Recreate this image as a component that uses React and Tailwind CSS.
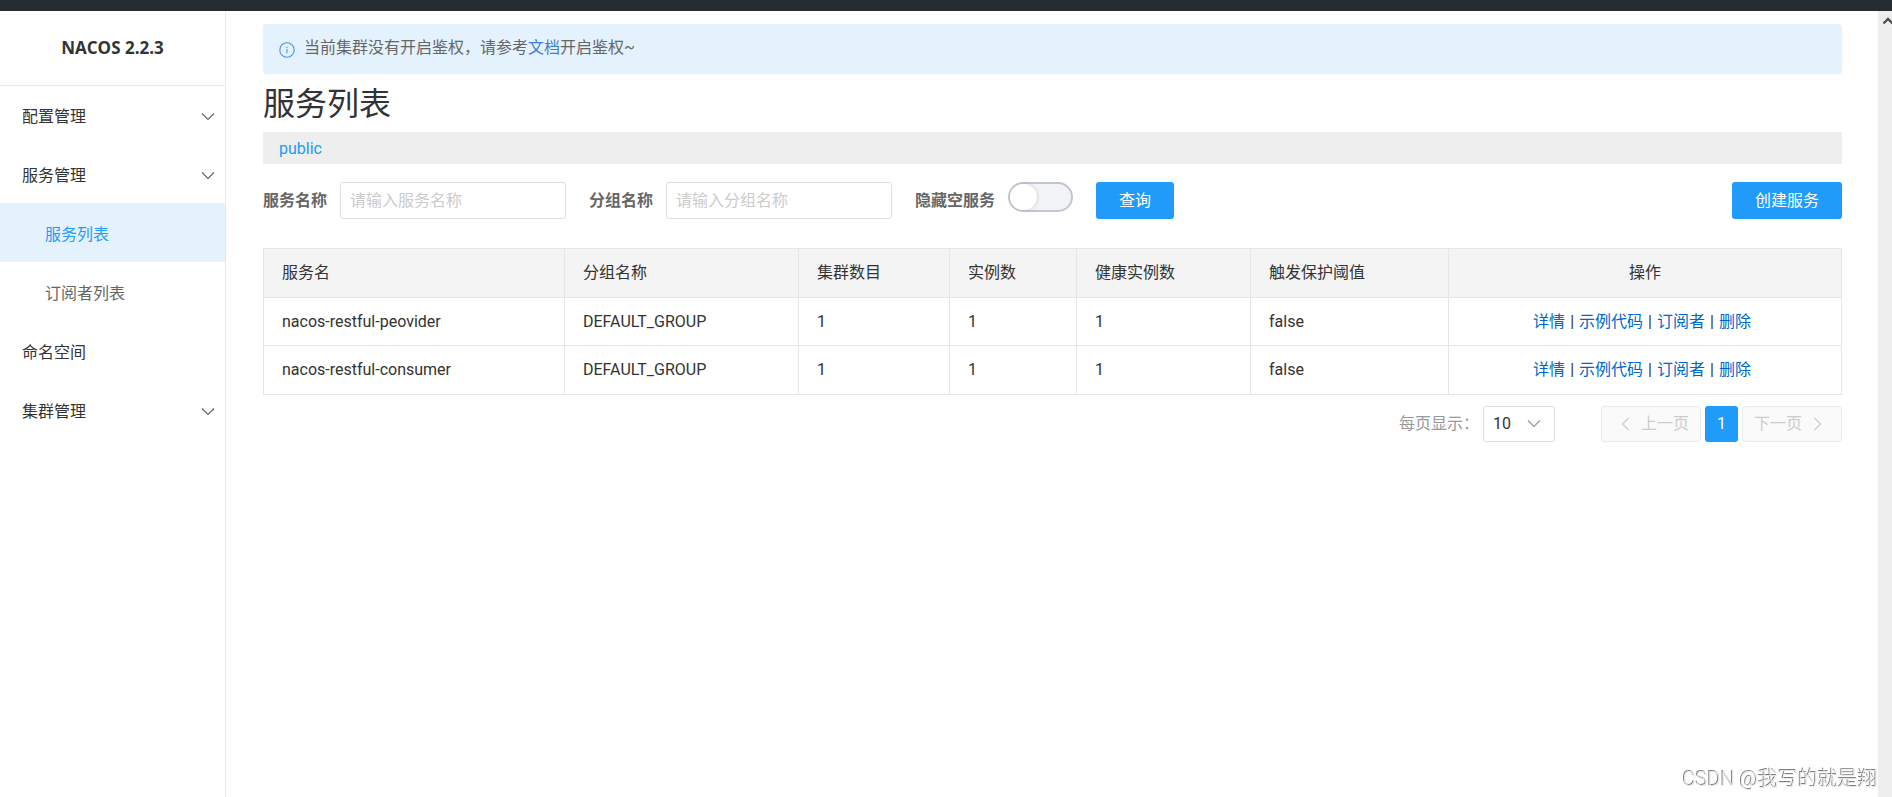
import { clsx } from 'clsx'

const menu = [
  { label: '配置管理', expandable: true },
  { label: '服务管理', expandable: true },
  { label: '服务列表', child: true, active: true },
  { label: '订阅者列表', child: true },
  { label: '命名空间' },
  { label: '集群管理', expandable: true },
]

const columns = [
  { title: '服务名', width: 'w-[301px]' },
  { title: '分组名称', width: 'w-[234px]' },
  { title: '集群数目', width: 'w-[151px]' },
  { title: '实例数', width: 'w-[127px]' },
  { title: '健康实例数', width: 'w-[174px]' },
  { title: '触发保护阈值', width: 'w-[198px]' },
]

const services = [
  { name: 'nacos-restful-peovider', group: 'DEFAULT_GROUP', clusters: 1, instances: 1, healthy: 1, threshold: 'false' },
  { name: 'nacos-restful-consumer', group: 'DEFAULT_GROUP', clusters: 1, instances: 1, healthy: 1, threshold: 'false' },
]

const actions = ['详情', '示例代码', '订阅者', '删除']

function Chevron({ className, d = 'M1 3.5 L7 9.5 L13 3.5' }) {
  return (
    <svg
      viewBox="0 0 14 14"
      className={clsx('h-3.5 w-3.5 shrink-0', className)}
      fill="none"
      stroke="currentColor"
      strokeWidth="1.2"
      aria-hidden="true"
    >
      <path d={d} />
    </svg>
  )
}

function Sidebar() {
  return (
    <aside className="w-[226px] shrink-0 border-r border-[#ebebeb]">
      <div className="flex h-[75px] items-center justify-center border-b border-[#ebebeb] font-['Open_Sans'] text-[17px] font-bold text-[#333]">
        NACOS 2.2.3
      </div>
      <nav className="-mt-px">
        {menu.map((item) => (
          <a
            key={item.label}
            href="#"
            className={clsx(
              'flex h-[59px] items-center justify-between pt-1 pr-2.5',
              item.child ? 'pl-[45px]' : 'pl-[22px]',
              item.active ? 'bg-[#e4f2fe] text-[#209bfa]' : item.child ? 'text-[#666]' : 'text-[#333]',
            )}
          >
            {item.label}
            {item.expandable && <Chevron className="text-[#666]" />}
          </a>
        ))}
      </nav>
    </aside>
  )
}

function AuthNotice() {
  return (
    <div className="flex h-[50px] items-center rounded-[3px] bg-[#e4f2fe] px-4 text-[#666]">
      <svg
        viewBox="0 0 16 16"
        className="mt-0.5 mr-[9px] h-4 w-4"
        fill="none"
        stroke="#4494f9"
        aria-hidden="true"
      >
        <circle cx="8" cy="8" r="7.2" strokeWidth="1.1" />
        <path d="M8 7 V11.2 M8 4.8 V6" strokeWidth="1.1" />
      </svg>
      <p className="pb-0.5">
        当前集群没有开启鉴权，请参考
        <a href="#" className="text-[#3f7fd6]">文档</a>
        开启鉴权~
      </p>
    </div>
  )
}

function SearchField({ id, label, placeholder }) {
  return (
    <div className="mr-[23px] flex items-center">
      <label htmlFor={id} className="mr-[13px] font-bold">{label}</label>
      <input
        id={id}
        type="text"
        placeholder={placeholder}
        className="h-[37px] w-[226px] rounded-[3px] border border-[#dcdee3] bg-white px-[9px] placeholder:text-[#ccc]"
      />
    </div>
  )
}

function SearchBar() {
  return (
    <form className="mt-[18px] flex items-start justify-between">
      <div className="flex items-start text-[#666]">
        <SearchField id="service-name" label="服务名称" placeholder="请输入服务名称" />
        <SearchField id="group-name" label="分组名称" placeholder="请输入分组名称" />
        <label htmlFor="hide-empty" className="mr-[13px] leading-[37px] font-bold">隐藏空服务</label>
        <input
          id="hide-empty"
          type="checkbox"
          role="switch"
          className="mr-[23px] flex h-[30px] w-[65px] appearance-none rounded-full border-2 border-[#c4c6cf] bg-[#f2f3f7] before:h-[26px] before:w-[27px] before:rounded-full before:bg-white before:shadow-[1px_0_3px_rgba(0,0,0,0.12)]"
        />
        <button type="button" className="h-[37px] rounded-[3px] bg-[#209bfa] px-[23px] text-white">
          查询
        </button>
      </div>
      <button type="button" className="h-[37px] rounded-[3px] bg-[#209bfa] px-[23px] text-white">
        创建服务
      </button>
    </form>
  )
}

function ServiceTable() {
  return (
    <table className="mt-[29px] w-full table-fixed border-collapse text-left text-[#333] [&_td]:border [&_td]:border-[#e6e6e6] [&_td]:px-[18px] [&_th]:border [&_th]:border-[#e6e6e6] [&_th]:px-[18px]">
      <thead className="bg-[#f4f4f4]">
        <tr className="h-[49px]">
          {columns.map((col) => (
            <th key={col.title} className={clsx('font-normal', col.width)}>{col.title}</th>
          ))}
          <th className="text-center font-normal">操作</th>
        </tr>
      </thead>
      <tbody>
        {services.map((s) => (
          <tr key={s.name} className="h-12 last:h-[49px]">
            <td>{s.name}</td>
            <td>{s.group}</td>
            <td>{s.clusters}</td>
            <td>{s.instances}</td>
            <td>{s.healthy}</td>
            <td>{s.threshold}</td>
            <td>
              <div className="flex justify-center gap-[5px] pr-1.5">
                {actions.map((action, i) => (
                  <span key={action} className="flex gap-[5px]">
                    {i > 0 && <span>|</span>}
                    <a href="#" className="text-[#06c]">{action}</a>
                  </span>
                ))}
              </div>
            </td>
          </tr>
        ))}
      </tbody>
    </table>
  )
}

function Pagination() {
  return (
    <div className="mt-[11px] flex items-center justify-end">
      <label htmlFor="page-size" className="mr-1 text-[#999]">每页显示：</label>
      <div className="relative mr-[46px]">
        <select
          id="page-size"
          defaultValue="10"
          className="h-9 w-[72px] appearance-none rounded-[3px] border border-[#dcdee3] bg-white pl-[9px] text-[#333]"
        >
          <option>10</option>
          <option>20</option>
          <option>50</option>
        </select>
        <Chevron className="pointer-events-none absolute top-[11px] right-3.5 text-[#999]" />
      </div>
      <button
        type="button"
        disabled
        className="flex h-9 items-center gap-2 rounded-[3px] border border-[#ebebeb] bg-[#fafafa] pr-[11px] pl-[17px] text-[#ccc]"
      >
        <Chevron d="M9.5 1 L3.5 7 L9.5 13" />
        上一页
      </button>
      <button type="button" className="mx-1 h-9 w-[33px] rounded-[3px] bg-[#209bfa] text-white">1</button>
      <button
        type="button"
        disabled
        className="flex h-9 items-center gap-2 rounded-[3px] border border-[#ebebeb] bg-[#fafafa] pr-[17px] pl-[11px] text-[#ccc]"
      >
        下一页
        <Chevron d="M4.5 1 L10.5 7 L4.5 13" />
      </button>
    </div>
  )
}

export default function App() {
  return (
    <div className="flex min-h-screen flex-col bg-white font-[Roboto,'Noto_Sans_CJK_SC',sans-serif] text-base">
      <header className="h-[11px] bg-[#252b2f]" />
      <div className="flex flex-1">
        <Sidebar />
        <main className="min-w-0 flex-1 pt-[13px] pr-9 pl-[37px]">
          <AuthNotice />
          <h1 className="mt-[5px] text-[32px] leading-[50px] text-[#333]">服务列表</h1>
          <div className="mt-[3px] bg-[#eee] px-4 pt-0.5 leading-[30px]">
            <a href="#" className="text-[#209bfa]">public</a>
          </div>
          <SearchBar />
          <ServiceTable />
          <Pagination />
        </main>
        <div className="w-3.5 shrink-0 overflow-hidden bg-[#eee]">
          <svg viewBox="0 0 14 20" className="h-5 w-3.5" fill="none" stroke="#505050" strokeWidth="2.4" aria-hidden="true">
            <path d="M5.5 12.5 L10 8 L14.5 12.5" />
          </svg>
        </div>
      </div>
      <div className="fixed right-3.5 bottom-1 text-xl leading-7 font-light text-[#e6e6e6] [text-shadow:-1px_-1px_0_#808080]">
        CSDN @我写的就是翔
      </div>
    </div>
  )
}
